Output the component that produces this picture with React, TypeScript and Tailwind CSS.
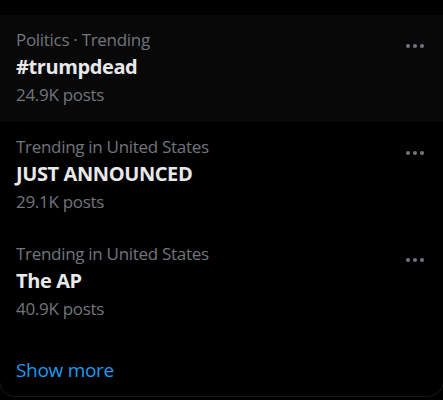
const trends = [
  { context: "Politics · Trending", title: "#trumpdead", posts: "24.9K posts", active: true },
  { context: "Trending in United States", title: "JUST ANNOUNCED", posts: "29.1K posts" },
  { context: "Trending in United States", title: "The AP", posts: "40.9K posts" },
]

const Dots = () => (
  <svg width="20" height="6" viewBox="0 0 20 6" className="text-[#71767b]">
    <circle cx="3" cy="3" r="2" fill="currentColor" />
    <circle cx="10" cy="3" r="2" fill="currentColor" />
    <circle cx="17" cy="3" r="2" fill="currentColor" />
  </svg>
)

export default function App() {
  return (
    <div className="w-[443px] h-[400px] overflow-hidden bg-black font-['Open_Sans',sans-serif]">
      <div className="-mx-px -mt-6 h-[421px] rounded-2xl border border-[#16181a] pt-[38px]">
        {trends.map((t) => (
          <div
            key={t.title}
            className={`flex justify-between h-[107px] pl-[16px] pr-[18px] pt-[12px] ${t.active ? "bg-[#080808]" : ""}`}
          >
            <div className="flex flex-col">
              <span className="text-[17px] leading-[26px] text-[#71767b] tracking-[-0.3px]">{t.context}</span>
              <span className="text-[20px] leading-[28px] font-bold text-[#e7e9ea] tracking-[-0.4px]">{t.title}</span>
              <span className="text-[17px] leading-[28px] text-[#71767b] tracking-[-0.3px]">{t.posts}</span>
            </div>
            <div className="pt-[16px]">
              <Dots />
            </div>
          </div>
        ))}
        <div className="pl-[16px] pt-[21px] text-[19px] leading-[26px] text-[#1d9bf0] tracking-[-0.3px]">
          Show more
        </div>
      </div>
    </div>
  )
}
